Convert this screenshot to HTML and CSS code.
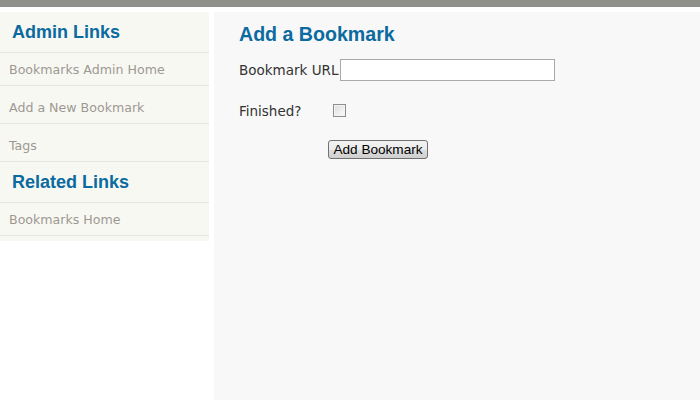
FILE: index.html
```html
<!DOCTYPE html>
<html>
<head>
<meta charset="utf-8">
<link rel="stylesheet" href="styles.css">
</head>
<body>
<div class="topbar"></div>
<div class="layout">
  <aside class="sidebar">
    <h2 class="side-head">Admin Links</h2>
    <a class="side-link short" href="#">Bookmarks Admin Home</a>
    <a class="side-link" href="#">Add a New Bookmark</a>
    <a class="side-link" href="#">Tags</a>
    <h2 class="side-head">Related Links</h2>
    <a class="side-link short" href="#">Bookmarks Home</a>
  </aside>
  <main class="main">
    <h1 class="title">Add a Bookmark</h1>
    <div class="row url-row">
      <label class="label">Bookmark URL</label>
      <input class="text-input" type="text">
    </div>
    <div class="row check-row">
      <label class="label">Finished?</label>
      <span class="checkbox"></span>
    </div>
    <div class="row btn-row">
      <button class="btn" type="button">Add Bookmark</button>
    </div>
  </main>
</div>
</body>
</html>
```
FILE: styles.css
```css
html, body {
  margin: 0;
  padding: 0;
  background: #ffffff;
  height: 100%;
}
body {
  font-family: "DejaVu Sans", sans-serif;
  overflow: hidden;
}
.topbar {
  height: 7px;
  background: #90908b;
}
.layout {
  display: flex;
  align-items: flex-start;
  gap: 5px;
  padding-top: 5px;
  height: 388px;
}
.sidebar {
  width: 209px;
  background: #f8f8f3;
  display: flex;
  flex-direction: column;
  padding-bottom: 5px;
}
.side-head {
  margin: 0;
  height: 41px;
  box-sizing: border-box;
  display: flex;
  align-items: center;
  padding: 1px 0 0 12px;
  font-family: "Liberation Sans", Arial, sans-serif;
  font-weight: bold;
  font-size: 18px;
  color: #0b6a9f;
  border-bottom: 1px solid #e6e5da;
}
.side-link {
  display: flex;
  align-items: center;
  height: 38px;
  box-sizing: border-box;
  padding: 6px 0 0 9px;
  font-size: 12.6px;
  color: #9d9892;
  text-decoration: none;
  border-bottom: 1px solid #e6e5da;
}
.side-link.short {
  height: 33px;
  padding-top: 1px;
}
.main {
  flex: 1;
  align-self: stretch;
  background: #f8f8f8;
  padding: 11px 25px 10px;
}
.title {
  margin: 0 0 13px 0;
  font-family: "Liberation Sans", Arial, sans-serif;
  font-weight: bold;
  font-size: 19.6px;
  color: #0b6a9f;
}
.row {
  display: flex;
  align-items: center;
}
.label {
  font-size: 13.5px;
  color: #333;
}
.url-row {
  height: 22px;
}
.text-input {
  width: 215px;
  height: 22px;
  box-sizing: border-box;
  margin: 0 0 0 2px;
  border: 1px solid #a9a9a9;
  background: #fff;
  padding: 0;
}
.check-row {
  margin-top: 21px;
  height: 18px;
}
.checkbox {
  width: 11px;
  height: 11px;
  margin: -1px 0 0 32px;
  border: 1px solid #8f8f8f;
  background: linear-gradient(135deg, #dcdcdc, #fdfdfd);
  box-shadow: inset 0 0 0 1px #f3f3f3;
}
.btn-row {
  margin-top: 20px;
  padding-left: 89px;
}
.btn {
  font-family: "Liberation Sans", Arial, sans-serif;
  font-size: 13.6px;
  color: #000;
  height: 19px;
  width: 100px;
  padding: 0;
  border: 1px solid #707070;
  border-radius: 3px;
  background: linear-gradient(#f2f2f2, #ebebeb 50%, #dddddd 51%, #cfcfcf);
}
```
